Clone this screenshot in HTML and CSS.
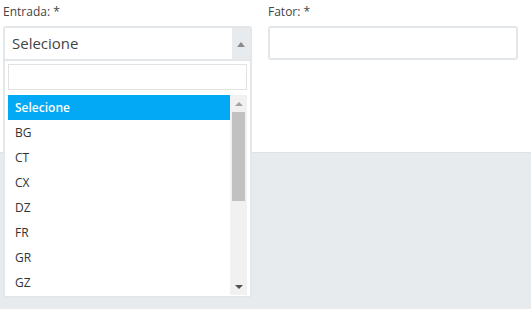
FILE: index.html
```html
<!DOCTYPE html>
<html lang="pt">
<head>
    <meta charset="UTF-8">
    <meta name="viewport" content="width=device-width, initial-scale=1.0">
    <title>Entrada / Fator</title>
    <link rel="stylesheet" href="styles.css">
</head>
<body>
    <div class="panel">
        <div class="form-row">
            <div class="field">
                <label class="field-label">Entrada: *</label>
                <div class="select open">
                    <div class="select-box">
                        <span class="select-value">Selecione</span>
                        <span class="select-arrow"><span class="tri-up"></span></span>
                    </div>
                    <div class="dropdown">
                        <input type="text" class="dropdown-search">
                        <div class="dropdown-body">
                            <ul class="options">
                                <li class="option active">Selecione</li>
                                <li class="option">BG</li>
                                <li class="option">CT</li>
                                <li class="option">CX</li>
                                <li class="option">DZ</li>
                                <li class="option">FR</li>
                                <li class="option">GR</li>
                                <li class="option">GZ</li>
                            </ul>
                            <div class="scrollbar">
                                <span class="sb-button"><span class="sb-up"></span></span>
                                <div class="sb-track">
                                    <div class="sb-thumb"></div>
                                </div>
                                <span class="sb-button"><span class="sb-down"></span></span>
                            </div>
                        </div>
                    </div>
                </div>
            </div>
            <div class="field">
                <label class="field-label">Fator: *</label>
                <input type="text" class="text-input">
            </div>
        </div>
    </div>
    <div class="page-rest"></div>
</body>
</html>
```

FILE: styles.css
```css
html, body {
    margin: 0;
    padding: 0;
}

body {
    font-family: 'Open Sans', 'Liberation Sans', sans-serif;
    background-color: white;
    color: #333;
}

.panel {
    position: relative;
    z-index: 2;
    background-color: white;
    height: 153px;
    box-sizing: border-box;
    border-bottom: 1px solid #dfe3e7;
}

.page-rest {
    background-color: #e8ebee;
    height: 156px;
}

.form-row {
    display: grid;
    grid-template-columns: 249px 250px;
    gap: 16px;
    padding: 3px 0 0 3px;
}

.field {
    display: flex;
    flex-direction: column;
}

.field-label {
    font-size: 12px;
    line-height: 17px;
    color: #444;
    margin-bottom: 6px;
}

.text-input {
    height: 34px;
    box-sizing: border-box;
    border: 2px solid #e4e7ea;
    border-radius: 3px;
    outline: none;
    margin: 0;
}

.select {
    position: relative;
}

.select-box {
    display: flex;
    align-items: stretch;
    height: 34px;
    box-sizing: border-box;
    border: 2px solid #e4e7ea;
    border-bottom-width: 1px;
    border-radius: 3px 3px 0 0;
    background-color: white;
}

.select-value {
    flex-grow: 1;
    font-size: 15px;
    line-height: 31px;
    padding-left: 7px;
    color: #444;
}

.select-arrow {
    width: 18px;
    background-color: #e8ebee;
    display: flex;
    align-items: center;
    justify-content: center;
}

.tri-up {
    width: 0;
    height: 0;
    border-left: 4px solid transparent;
    border-right: 4px solid transparent;
    border-bottom: 5px solid #8a8a8a;
    margin-top: 1px;
}

.dropdown {
    position: absolute;
    top: 100%;
    left: 0;
    right: 0;
    background-color: white;
    border: 2px solid #e4e7ea;
    border-top: 1px solid #e4e7ea;
    border-radius: 0 0 3px 3px;
    padding: 3px 3px 1px;
    z-index: 10;
}

.dropdown-search {
    display: block;
    width: 100%;
    height: 26px;
    box-sizing: border-box;
    border: 1px solid #e2e2e2;
    outline: none;
    margin: 0 0 5px;
}

.dropdown-body {
    display: flex;
    height: 200px;
}

.options {
    list-style: none;
    margin: 0;
    padding: 0;
    flex-grow: 1;
    overflow: hidden;
}

.option {
    height: 25px;
    line-height: 25px;
    font-size: 12px;
    padding-left: 7px;
    color: #333;
}

.option.active {
    background-color: #03a9f4;
    color: white;
    font-weight: 600;
}

.scrollbar {
    width: 17px;
    background-color: #f1f1f1;
    display: flex;
    flex-direction: column;
}

.sb-button {
    height: 17px;
    display: flex;
    align-items: center;
    justify-content: center;
}

.sb-up {
    border-left: 4px solid transparent;
    border-right: 4px solid transparent;
    border-bottom: 4px solid #a3a3a3;
}

.sb-down {
    border-left: 4px solid transparent;
    border-right: 4px solid transparent;
    border-top: 4px solid #505050;
}

.sb-track {
    flex-grow: 1;
    padding: 0 2px;
}

.sb-thumb {
    height: 89px;
    background-color: #c1c1c1;
}
```
